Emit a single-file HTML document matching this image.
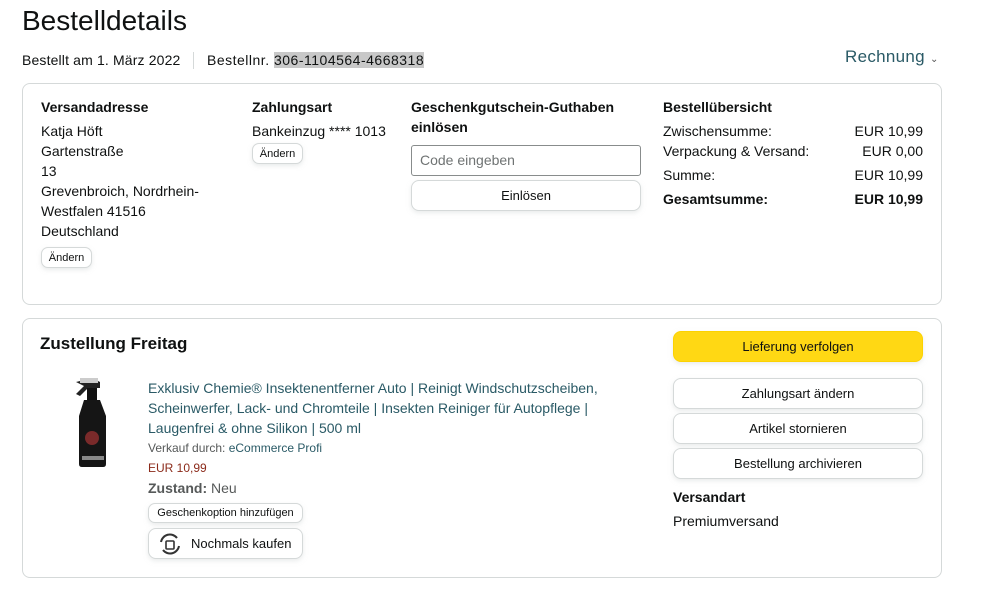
<!DOCTYPE html>
<html><head><meta charset="utf-8"><style>
*{box-sizing:border-box;margin:0;padding:0}
body{width:983px;height:593px;background:#fff;font-family:"Liberation Sans",sans-serif;color:#0f1111;font-size:14px;position:relative;overflow:hidden}
.a{position:absolute;white-space:nowrap}
.box{position:absolute;border:1px solid #d5d9d9;border-radius:8px}
.b{font-weight:bold}
.sbtn{position:absolute;border:1px solid #d5d9d9;border-radius:7px;background:#fff;box-shadow:0 2px 4px rgba(213,217,217,.5);font-size:11px;display:flex;align-items:center;justify-content:center}
.btn{position:absolute;border:1px solid #d5d9d9;border-radius:8px;background:#fff;box-shadow:0 2px 5px rgba(213,217,217,.5);font-size:13px;display:flex;align-items:center;justify-content:center}
.lh{line-height:20px}
</style></head><body>
<div class="a" style="left:22px;top:5px;font-size:28px">Bestelldetails</div>
<div class="a" style="left:22px;top:52px;font-size:14px;letter-spacing:0.15px">Bestellt am 1. März 2022</div>
<div class="a" style="left:193px;top:52px;width:1px;height:17px;background:#d5d9d9"></div>
<div class="a" style="left:207px;top:52px;font-size:14px;letter-spacing:0.5px">Bestellnr. <span style="background:#c8c8c8">306-1104564-4668318</span></div>
<div class="a" style="left:845px;top:47px;font-size:17px;color:#2a5a66;letter-spacing:0.3px">Rechnung <span style="font-size:10px;color:#555">⌄</span></div>

<div class="box" style="left:22px;top:83px;width:920px;height:222px"></div>
<div class="a b" style="left:41px;top:99px">Versandadresse</div>
<div class="a lh" style="left:41px;top:121px">Katja Höft<br>Gartenstraße<br>13<br>Grevenbroich, Nordrhein-<br>Westfalen 41516<br>Deutschland</div>
<div class="sbtn" style="left:41px;top:247px;width:51px;height:21px">Ändern</div>
<div class="a b" style="left:252px;top:99px">Zahlungsart</div>
<div class="a" style="left:252px;top:123px">Bankeinzug **** 1013</div>
<div class="sbtn" style="left:252px;top:143px;width:51px;height:21px">Ändern</div>
<div class="a b lh" style="left:411px;top:97px">Geschenkgutschein-Guthaben<br>einlösen</div>
<div class="a" style="left:411px;top:145px;width:230px;height:31px;border:1px solid #888c8c;border-radius:3px;padding:6px 8px;color:#6f7373">Code eingeben</div>
<div class="btn" style="left:411px;top:180px;width:230px;height:31px">Einlösen</div>
<div class="a b" style="left:663px;top:99px">Bestellübersicht</div>
<div class="a" style="left:663px;top:123px">Zwischensumme:</div><div class="a" style="right:60px;top:123px">EUR 10,99</div>
<div class="a" style="left:663px;top:143px">Verpackung &amp; Versand:</div><div class="a" style="right:60px;top:143px">EUR 0,00</div>
<div class="a" style="left:663px;top:167px">Summe:</div><div class="a" style="right:60px;top:167px">EUR 10,99</div>
<div class="a b" style="left:663px;top:191px">Gesamtsumme:</div><div class="a b" style="right:60px;top:191px">EUR 10,99</div>

<div class="box" style="left:22px;top:318px;width:920px;height:260px"></div>
<div class="a b" style="left:40px;top:334px;font-size:17px">Zustellung Freitag</div>
<svg class="a" style="left:70px;top:376px" width="42" height="92" viewBox="0 0 42 92">
<path d="M6 6 L22 2 L30 6 L30 12 L18 12 L10 20 L6 18 L14 10 Z" fill="#222"/>
<rect x="10" y="2" width="18" height="5" fill="#ccc"/>
<rect x="17" y="12" width="10" height="12" fill="#111"/>
<path d="M14 24 L30 24 L36 40 L36 88 Q36 91 33 91 L12 91 Q9 91 9 88 L9 40 Z" fill="#151515"/>
<circle cx="22" cy="62" r="7" fill="#7a2a2a"/>
<rect x="12" y="80" width="22" height="4" fill="#888"/>
</svg>
<div class="a" style="left:148px;top:378px;line-height:20px;color:#2a5a66">Exklusiv Chemie® Insektenentferner Auto | Reinigt Windschutzscheiben,<br>Scheinwerfer, Lack- und Chromteile | Insekten Reiniger für Autopflege |<br>Laugenfrei &amp; ohne Silikon | 500 ml</div>
<div class="a" style="left:148px;top:441px;font-size:12px;color:#565959">Verkauf durch: <span style="color:#2a5a66">eCommerce Profi</span></div>
<div class="a" style="left:148px;top:461px;font-size:12px;color:#8b2a1a">EUR 10,99</div>
<div class="a" style="left:148px;top:480px;color:#565959"><b>Zustand:</b> Neu</div>
<div class="sbtn" style="left:148px;top:503px;width:155px;height:20px">Geschenkoption hinzufügen</div>
<div class="btn" style="left:148px;top:528px;width:155px;height:31px;justify-content:flex-start;padding-left:8px">
<svg width="26" height="24" viewBox="0 0 26 24"><path d="M4 10 A9 9 0 0 1 20 6" stroke="#333" stroke-width="2" fill="none"/><path d="M22 14 A9 9 0 0 1 6 18" stroke="#333" stroke-width="2" fill="none"/><rect x="9" y="9" width="8" height="8" rx="1" stroke="#333" stroke-width="1.6" fill="none"/></svg>
<span style="margin-left:8px">Nochmals kaufen</span></div>

<div class="btn" style="left:673px;top:331px;width:250px;height:31px;background:#ffd814;border-color:#fcd200">Lieferung verfolgen</div>
<div class="btn" style="left:673px;top:378px;width:250px;height:31px">Zahlungsart ändern</div>
<div class="btn" style="left:673px;top:413px;width:250px;height:31px">Artikel stornieren</div>
<div class="btn" style="left:673px;top:448px;width:250px;height:31px">Bestellung archivieren</div>
<div class="a b" style="left:673px;top:489px">Versandart</div>
<div class="a" style="left:673px;top:513px">Premiumversand</div>
</body></html>
